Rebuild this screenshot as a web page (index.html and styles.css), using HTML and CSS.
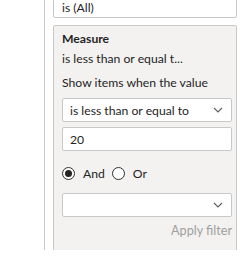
FILE: index.html
```html
<!DOCTYPE html>
<html lang="en">
<head>
  <meta charset="UTF-8" />
  <title>Filters</title>
  <link rel="stylesheet" href="styles.css">
</head>
<body>
  <div class="pane">
    <div class="card card-top">
      <div class="summary">is (All)</div>
    </div>

    <div class="card card-open">
      <div class="title">Measure</div>
      <div class="summary">is less than or equal t...</div>
      <div class="label">Show items when the value</div>
      <div class="select">
        <span>is less than or equal to</span>
        <svg class="chev" width="10" height="6" viewBox="0 0 10 6"><path d="M1 1l4 4 4-4" fill="none" stroke="#605e5c" stroke-width="1.1"/></svg>
      </div>
      <div class="input">20</div>
      <div class="radios">
        <span class="radio on"></span><span class="rlabel">And</span>
        <span class="radio"></span><span class="rlabel">Or</span>
      </div>
      <div class="select">
        <span></span>
        <svg class="chev" width="10" height="6" viewBox="0 0 10 6"><path d="M1 1l4 4 4-4" fill="none" stroke="#605e5c" stroke-width="1.1"/></svg>
      </div>
      <div class="apply">Apply filter</div>
    </div>

    <div class="card card-next"></div>
  </div>
</body>
</html>
```

FILE: styles.css
```css
body {
  margin: 0;
  font-family: 'Lato', sans-serif;
  font-size: 12.2px;
  color: #252423;
  background: #ffffff;
  overflow: hidden;
}
.pane {
  margin-left: 44px;
  width: 191px;
  height: 263px;
  border-left: 1px solid #c8c8c8;
  padding-left: 8px;
}
.card {
  box-sizing: border-box;
  width: 184px;
  border: 1px solid #c8c8c8;
  border-radius: 2px;
  background: #ffffff;
  padding: 0 4px 0 8px;
}
.card-top {
  height: 31px;
  margin-top: -13px;
  padding-top: 11px;
}
.card-open {
  margin-top: 7px;
  height: 226px;
  background: #f3f2f1;
  padding-top: 3px;
}
.card-next {
  margin-top: 7px;
  height: 5px;
  border-bottom: none;
}
.title {
  font-weight: 700;
  line-height: 18px;
  margin-top: 1px;
}
.summary {
  line-height: 17px;
  margin-top: 2px;
}
.card-top .summary {
  margin-top: 0;
}
.label {
  line-height: 17px;
  margin-top: 7px;
}
.select, .input {
  box-sizing: border-box;
  height: 24px;
  border: 1px solid #c8c8c8;
  border-radius: 2px;
  background: #ffffff;
  padding: 0 8px 0 7px;
  display: flex;
  align-items: center;
  justify-content: space-between;
}
.select {
  margin-top: 7px;
}
.input {
  margin-top: 5px;
}
.radios {
  display: flex;
  align-items: center;
  height: 20px;
  margin-top: 12px;
  margin-bottom: 10px;
}
.radio {
  box-sizing: border-box;
  width: 13px;
  height: 13px;
  border: 1px solid #323130;
  border-radius: 50%;
  background: #ffffff;
  position: relative;
}
.radio.on::after {
  content: "";
  position: absolute;
  left: 2px;
  top: 2px;
  width: 7px;
  height: 7px;
  border-radius: 50%;
  background: #252423;
}
.rlabel {
  margin-left: 8px;
  margin-right: 7px;
}
.apply {
  text-align: right;
  color: #a19f9d;
  margin-top: 5px;
  line-height: 18px;
  font-size: 12.6px;
}
```
